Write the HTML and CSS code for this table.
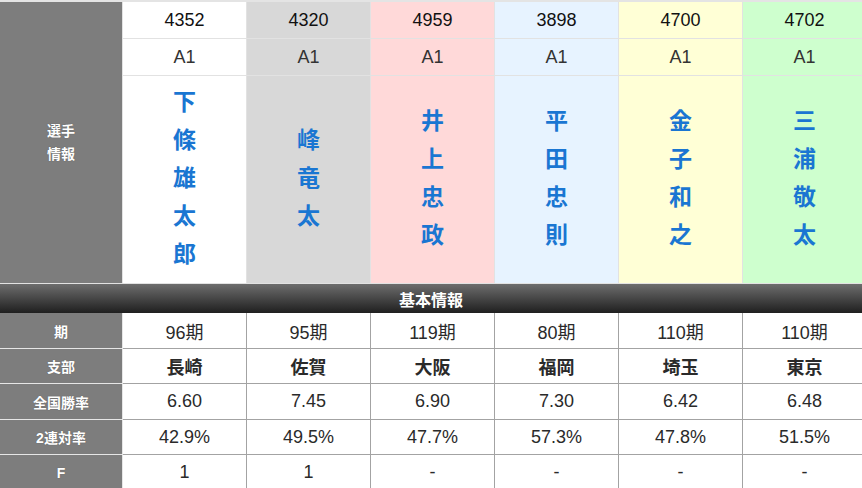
FILE: index.html
```html
<!DOCTYPE html>
<html lang="ja">
<head>
<meta charset="utf-8">
<title>選手情報</title>
<link rel="stylesheet" href="styles.css">
</head>
<body>
<div class="wrap">
  <div class="top">
    <div class="label label-tall">選手<br>情報</div>
    <div class="c c1 num">4352</div>
    <div class="c c2 num">4320</div>
    <div class="c c3 num">4959</div>
    <div class="c c4 num">3898</div>
    <div class="c c5 num">4700</div>
    <div class="c c6 num">4702</div>

    <div class="c c1 cls">A1</div>
    <div class="c c2 cls">A1</div>
    <div class="c c3 cls">A1</div>
    <div class="c c4 cls">A1</div>
    <div class="c c5 cls">A1</div>
    <div class="c c6 cls">A1</div>

    <div class="c c1 name">下<br>條<br>雄<br>太<br>郎</div>
    <div class="c c2 name">峰<br>竜<br>太</div>
    <div class="c c3 name">井<br>上<br>忠<br>政</div>
    <div class="c c4 name">平<br>田<br>忠<br>則</div>
    <div class="c c5 name">金<br>子<br>和<br>之</div>
    <div class="c c6 name">三<br>浦<br>敬<br>太</div>
  </div>

  <div class="bar">基本情報</div>

  <div class="bottom">
    <div class="label">期</div>
    <div class="v">96期</div>
    <div class="v">95期</div>
    <div class="v">119期</div>
    <div class="v">80期</div>
    <div class="v">110期</div>
    <div class="v">110期</div>

    <div class="label">支部</div>
    <div class="v b">長崎</div>
    <div class="v b">佐賀</div>
    <div class="v b">大阪</div>
    <div class="v b">福岡</div>
    <div class="v b">埼玉</div>
    <div class="v b">東京</div>

    <div class="label">全国勝率</div>
    <div class="v">6.60</div>
    <div class="v">7.45</div>
    <div class="v">6.90</div>
    <div class="v">7.30</div>
    <div class="v">6.42</div>
    <div class="v">6.48</div>

    <div class="label">2連対率</div>
    <div class="v">42.9%</div>
    <div class="v">49.5%</div>
    <div class="v">47.7%</div>
    <div class="v">57.3%</div>
    <div class="v">47.8%</div>
    <div class="v">51.5%</div>

    <div class="label">F</div>
    <div class="v">1</div>
    <div class="v">1</div>
    <div class="v">-</div>
    <div class="v">-</div>
    <div class="v">-</div>
    <div class="v">-</div>
  </div>
</div>
</body>
</html>
```

FILE: styles.css
```css
html, body {
  margin: 0;
  padding: 0;
  background: #ffffff;
}

body {
  font-family: "Liberation Sans", Arial, "Noto Sans CJK JP", sans-serif;
  overflow: hidden;
}

.wrap {
  width: 862px;
  height: 488px;
  overflow: hidden;
  border-top: 2px solid #e4e4e4;
  box-sizing: border-box;
}

.top {
  display: grid;
  grid-template-columns: 122px repeat(6, 123px);
  grid-template-rows: 36px 36px 207px;
  gap: 1px;
  background: #e2e2e2;
  width: 867px;
  border-bottom: 1px solid #e2e2e2;
}

.label {
  background: #7d7d7d;
  color: #ffffff;
  font-family: "Liberation Sans", Arial, "Noto Sans CJK JP", sans-serif;
  font-weight: bold;
  font-size: 14px;
  display: flex;
  align-items: center;
  justify-content: center;
  text-align: center;
  text-shadow: 0 0 1px #555;
}

.label-tall {
  grid-row: 1 / span 3;
  line-height: 23px;
}

.c {
  display: flex;
  align-items: center;
  justify-content: center;
  text-align: center;
}

.c1 { background: #ffffff; }
.c2 { background: #d8d8d8; }
.c3 { background: #ffd9d9; }
.c4 { background: #e7f3ff; }
.c5 { background: #ffffd6; }
.c6 { background: #ceffce; }

.num {
  font-size: 18px;
  color: #111111;
}

.cls {
  font-size: 18px;
  color: #333333;
}

.name {
  font-family: "Noto Sans CJK JP", sans-serif;
  font-weight: bold;
  font-size: 23px;
  line-height: 38px;
  color: #1a76d2;
  padding-bottom: 7px;
  box-sizing: border-box;
}

.bar {
  height: 29px;
  width: 862px;
  background: linear-gradient(#6d6d6d, #1f1f1f);
  color: #ffffff;
  font-family: "Noto Sans CJK JP", sans-serif;
  font-weight: bold;
  font-size: 16px;
  display: flex;
  align-items: center;
  justify-content: center;
}

.bottom {
  display: grid;
  grid-template-columns: 123px repeat(6, 124px);
  grid-template-rows: 36px 35px 36px 35px 36px;
  width: 867px;
}

.bottom .label {
  border-right: 1px solid #e6e6e6;
  border-bottom: 1px solid #e6e6e6;
}

.v {
  display: flex;
  align-items: center;
  justify-content: center;
  font-size: 18px;
  color: #2a2a2a;
  border-right: 1px solid #a3a3a3;
  border-bottom: 1px solid #a3a3a3;
  background: #ffffff;
}

.v.b {
  font-family: "Noto Sans CJK JP", sans-serif;
  font-weight: bold;
}
```
